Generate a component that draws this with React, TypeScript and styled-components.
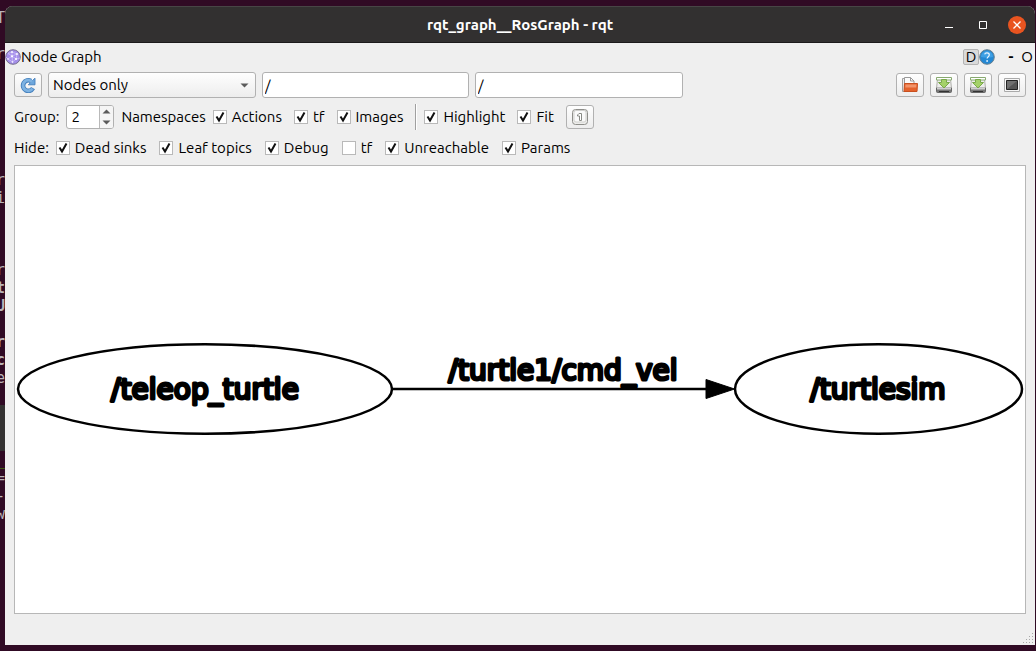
import React, { useState } from "react";
import styled, { createGlobalStyle, css } from "styled-components";

const GlobalStyle = createGlobalStyle`
  *, *::before, *::after { box-sizing: border-box; }
  body { margin: 0; background: #300a24; }
  button, input, select { font: inherit; color: inherit; margin: 0; }
`;

const uiFont = `"Ubuntu", "Noto Sans", "Open Sans", sans-serif`;

const Desktop = styled.div`
  display: grid;
  grid-template-columns: 5px minmax(0, 1fr) 1px;
  min-height: 100vh;
  background: #300a24;
`;

const Terminal = styled.div`
  overflow: hidden;
  padding-top: 9px;
  font: 15px/18px "DejaVu Sans Mono", monospace;
  color: #b9b4b8;
`;

const TerminalLine = styled.div<{ $bold?: boolean; $green?: boolean }>`
  display: flex;
  justify-content: flex-end;
  height: 18px;
  font-weight: ${(p) => (p.$bold ? 700 : 400)};
  color: ${(p) => (p.$green ? "#4e9a06" : "inherit")};
`;

const TerminalTab = styled.div`
  height: 46px;
  background: #333131;
`;

const Window = styled.main`
  display: flex;
  flex-direction: column;
  margin: 6px 0;
  border-radius: 8px 8px 0 0;
  overflow: hidden;
  background: #efefef;
  font: 15px/20px ${uiFont};
  color: #000;
`;

const TitleBar = styled.header`
  display: grid;
  grid-template-columns: 1fr auto 1fr;
  align-items: center;
  height: 37px;
  background: #323030;
  border-top: 1px solid #474545;
  border-bottom: 1px solid #1c1a1b;
  color: #fff;
`;

const WindowTitle = styled.h1`
  grid-column: 2;
  margin: 0;
  font-size: 15px;
  line-height: 20px;
  font-weight: 700;
`;

const WindowControls = styled.div`
  display: flex;
  justify-content: flex-end;
  gap: 16px;
  padding-right: 9px;
`;

const WindowButton = styled.button<{ $close?: boolean }>`
  display: grid;
  place-items: center;
  width: 18px;
  height: 18px;
  padding: 0;
  border: 0;
  border-radius: 50%;
  background: ${(p) => (p.$close ? "#e95420" : "transparent")};
`;

const PluginBar = styled.div`
  display: flex;
  align-items: center;
  justify-content: space-between;
  height: 28px;
`;

const PluginName = styled.h2`
  display: flex;
  align-items: center;
  margin: 0;
  font-size: 15px;
  line-height: 20px;
  font-weight: 400;
`;

const PluginActions = styled.div`
  display: flex;
  align-items: center;
`;

const FlatButton = styled.button<{ $raised?: boolean; $bold?: boolean }>`
  display: grid;
  place-items: center;
  width: 16px;
  height: 16px;
  padding: 0;
  border: 0;
  background: transparent;
  line-height: 14px;
  font-weight: ${(p) => (p.$bold ? 700 : 400)};
  ${(p) =>
    p.$raised &&
    css`
      border: 1px solid #b4b4b4;
      border-radius: 2px;
      background: #dadada;
    `}
`;

const DockButtons = styled.div`
  display: flex;
  margin-left: 8px;
`;

const frame = css`
  border: 1px solid #b1b1b1;
  border-radius: 3px;
`;

const Toolbar = styled.div`
  display: grid;
  grid-template-columns: 28px 208px 207px 208px 1fr;
  align-items: center;
  gap: 6px;
  height: 28px;
  padding: 0 9px;
`;

const ToolButtons = styled.div`
  display: flex;
  justify-content: flex-end;
  gap: 6px;
`;

const ToolButton = styled.button`
  ${frame}
  display: grid;
  place-items: center;
  width: 28px;
  height: 24px;
  padding: 0;
  background: linear-gradient(#fefefe, #ededed);
`;

const SelectBox = styled.div`
  display: grid;
  align-items: center;

  > * {
    grid-area: 1 / 1;
  }

  > svg {
    justify-self: end;
    margin-right: 7px;
    pointer-events: none;
  }
`;

const Select = styled.select`
  ${frame}
  appearance: none;
  width: 100%;
  height: 26px;
  padding: 0 4px;
  background: linear-gradient(#fefefe, #ededed);
`;

const TextBox = styled.input`
  ${frame}
  width: 100%;
  height: 26px;
  padding: 0 2px;
  background: #fff;
`;

const OptionRow = styled.div<{ $tall?: boolean }>`
  display: flex;
  align-items: center;
  gap: ${(p) => (p.$tall ? "12px" : "13px")};
  height: ${(p) => (p.$tall ? "36px" : "26px")};
  padding: 0 9px;
`;

const FieldGroup = styled.div`
  display: flex;
  align-items: center;
  gap: 7px;
`;

const SpinBox = styled.div`
  ${frame}
  display: grid;
  grid-template-columns: 1fr 14px;
  width: 48px;
  height: 24px;
  overflow: hidden;
  background: #fff;
`;

const SpinInput = styled.input`
  appearance: textfield;
  min-width: 0;
  padding: 0 4px;
  border: 0;
  background: transparent;

  &::-webkit-inner-spin-button {
    appearance: none;
  }
`;

const SpinSteps = styled.div`
  display: grid;
  grid-template-rows: 1fr 1fr;
  border-left: 1px solid #b9b9b9;
  background: #f5f5f5;
`;

const StepButton = styled.button`
  display: grid;
  place-items: center;
  padding: 0;
  border: 0;
  background: transparent;
`;

const CheckLabel = styled.label`
  display: flex;
  align-items: center;
  gap: 5px;
  white-space: nowrap;
`;

const CheckMark = styled.span`
  display: grid;

  > * {
    grid-area: 1 / 1;
  }

  > svg {
    visibility: hidden;
    pointer-events: none;
  }

  > input:checked + svg {
    visibility: visible;
  }
`;

const CheckInput = styled.input`
  appearance: none;
  width: 14px;
  height: 14px;
  border: 1px solid #b9b9b9;
  background: #fff;
`;

const Separator = styled.div`
  width: 2px;
  height: 26px;
  border-left: 1px solid #a0a0a0;
  border-right: 1px solid #fff;
`;

const GraphView = styled.section`
  flex: 1;
  display: grid;
  align-items: center;
  margin: 4px 9px 0;
  border: 1px solid #b7b7b7;
  background: #fff;
`;

const GraphDrawing = styled.svg`
  display: block;
  width: 100%;
`;

const GraphText = styled.text`
  font: 28px "DejaVu Sans", sans-serif;
  text-anchor: middle;
  fill: #000;
  stroke: #000;
  stroke-width: 3px;
  stroke-linejoin: round;
`;

const StatusBar = styled.footer`
  display: flex;
  justify-content: flex-end;
  align-items: flex-end;
  height: 31px;
  padding: 0 1px 1px;
`;

const NodeGraphIcon = () => (
  <svg width="16" height="16" viewBox="0 0 16 16" aria-hidden="true">
    <circle cx="8" cy="8" r="7.3" fill="#a48fe9" stroke="#77708f" />
    <path d="M3 4.5 7 3l5 2-1 5-3.5 3L3 10l4-3 4 3M7 3v4L3 4.5M12 5 7 7l.5 6M1 8l2 2M11 10l4-1" fill="none" stroke="#d4c6fc" strokeWidth=".7" />
    <g fill="#fff">
      <circle cx="7" cy="3" r=".9" /><circle cx="12" cy="5" r=".9" /><circle cx="7" cy="7.3" r="1.1" />
      <circle cx="3" cy="10" r=".8" /><circle cx="11" cy="10" r="1.1" /><circle cx="7.5" cy="13" r=".8" />
    </g>
  </svg>
);

const HelpIcon = () => (
  <svg width="16" height="16" viewBox="0 0 16 16" aria-hidden="true">
    <circle cx="8" cy="8" r="7.3" fill="#2488d4" stroke="#69808f" />
    <path d="M2 8a6 6 0 0 1 12 0Q8 9 2 8z" fill="#3fa0e4" />
    <path d="M5.7 5.3C6 3.5 10.3 3.3 10.3 6c0 1.7-2.2 1.8-2.2 3.6" fill="none" stroke="#e8f4ff" strokeWidth="1.2" />
    <circle cx="8.1" cy="12" r=".9" fill="#e8f4ff" />
  </svg>
);

const RefreshIcon = () => (
  <svg width="16" height="16" viewBox="0 0 16 16" aria-hidden="true">
    <path d="M13 11.2A5.3 5.3 0 1 1 11 4" fill="none" stroke="#4580bd" strokeWidth="4.6" />
    <path d="M15 1.2v6.6H8.3l2-2 2.7-2.8z" fill="#6ca6dc" stroke="#4580bd" strokeWidth=".9" />
    <path d="M12.6 11.6A5.3 5.3 0 1 1 12 4.7" fill="none" stroke="#7db2e2" strokeWidth="2.8" />
  </svg>
);

const FolderIcon = () => (
  <svg width="18" height="18" viewBox="0 0 18 18" aria-hidden="true">
    <path d="M1.5 15.5v-13h4l1 1v12z" fill="#eee" stroke="#a0a0a0" />
    <path d="M3.5 14V1.5h6L13 5v9z" fill="#fcfcfc" stroke="#9a9a9a" />
    <path d="M9.5 1.5V5H13" fill="none" stroke="#9a9a9a" />
    <path d="M3.5 7.5h13l-.5 8H3z" fill="#e4622c" stroke="#c9501f" />
    <path d="M4.5 8.5h11l-.2 3h-11z" fill="#f2946a" />
  </svg>
);

const SaveIcon = () => (
  <svg width="18" height="18" viewBox="0 0 18 18" aria-hidden="true">
    <path d="M2.5 3h13l1 9.5h-15z" fill="#ededeb" stroke="#b0b0ac" />
    <path d="M1.5 12h15v3.5q0 1-1 1h-13q-1 0-1-1z" fill="#777" stroke="#666" />
    <path d="M2 11.5h14v2H2z" fill="#cfcfcf" />
    <path d="M4 15.5h10" stroke="#333" />
    <path d="M1.5 1.5h15V4h-15z" fill="#fff" stroke="#88aa70" />
    <path d="M6.5 3.5h5v3h3L9 12 3.5 6.500h3z" fill="#a4d169" stroke="#79a94a" />
  </svg>
);

const ImageIcon = () => (
  <svg width="16" height="14" viewBox="0 0 16 14" aria-hidden="true">
    <path d="M.5.5h15v13H.5z" fill="#f7f7f7" stroke="#aaa" />
    <path d="M2.5 2.5h11v9h-11z" fill="#555" stroke="#222" />
    <path d="M3 3h10L3 11z" fill="#707070" />
  </svg>
);

const FitIcon = () => (
  <svg width="16" height="16" viewBox="0 0 16 16" aria-hidden="true">
    <rect x=".5" y=".5" width="15" height="15" rx="3" fill="#ededeb" stroke="#8e8e8a" />
    <rect x="2" y="1.5" width="12" height="11.5" rx="2" fill="#fafafa" stroke="#d0d0cd" />
    <path d="M5.5 6 7 4.500h2.500v7h-2V7h-2z" fill="#fff" stroke="#888a85" />
  </svg>
);

const ArrowDown = () => (
  <svg width="9" height="5" viewBox="0 0 9 5" aria-hidden="true">
    <path d="M.5.5h8l-4 4z" fill="#5b5b5b" />
  </svg>
);

const ArrowUp = () => (
  <svg width="9" height="5" viewBox="0 0 9 5" aria-hidden="true">
    <path d="M.5 4.500h8l-4-4z" fill="#5b5b5b" />
  </svg>
);

const SizeGrip = () => (
  <svg width="11" height="11" viewBox="0 0 11 11" aria-hidden="true">
    <path d="M9 0h1v1H9zM6 3h1v1H6zM9 3h1v1H9zM3 6h1v1H3zM6 6h1v1H6zM9 6h1v1H9zM0 9h1v1H0zM3 9h1v1H3zM6 9h1v1H6zM9 9h1v1H9z" fill="#a8a8a8" />
  </svg>
);

function Check({ label, on = true }: { label: string; on?: boolean }) {
  return (
    <CheckLabel>
      <CheckMark>
        <CheckInput type="checkbox" defaultChecked={on} />
        <svg width="14" height="14" viewBox="0 0 14 14" aria-hidden="true">
          <path d="M3.5 6.5 6 10.5l4.5-8" fill="none" stroke="#111" strokeWidth="2" />
        </svg>
      </CheckMark>
      {label}
    </CheckLabel>
  );
}

const terminalText = ["T", "", "r", "", "", "", "", "", "", "r", "i", "", "", "", "r"];
const terminalBold = ["t", "U", "", "r", "c"];

export default function App() {
  const [depth, setDepth] = useState(2);
  return (
    <Desktop>
      <GlobalStyle />
      <Terminal aria-hidden="true">
        {terminalText.map((t, i) => <TerminalLine key={i}>{t}</TerminalLine>)}
        {terminalBold.map((t, i) => <TerminalLine key={i} $bold>{t}</TerminalLine>)}
        <TerminalLine>e</TerminalLine>
        <TerminalLine />
        <TerminalTab />
        <TerminalLine $green>_</TerminalLine>
        <TerminalLine>=</TerminalLine>
        <TerminalLine>-</TerminalLine>
        <TerminalLine>w</TerminalLine>
      </Terminal>
      <Window>
        <TitleBar>
          <WindowTitle>rqt_graph__RosGraph - rqt</WindowTitle>
          <WindowControls>
            <WindowButton aria-label="Minimize">
              <svg width="8" height="8"><path d="M0 6.500h8" stroke="#fff" /></svg>
            </WindowButton>
            <WindowButton aria-label="Maximize">
              <svg width="8" height="8"><path d="M.5.5h7v7h-7z" fill="none" stroke="#fff" /></svg>
            </WindowButton>
            <WindowButton $close aria-label="Close">
              <svg width="8" height="8"><path d="M.5.5l7 7M7.5.5l-7 7" stroke="#fff" strokeWidth="1.3" /></svg>
            </WindowButton>
          </WindowControls>
        </TitleBar>
        <PluginBar>
          <PluginName><NodeGraphIcon />Node Graph</PluginName>
          <PluginActions>
            <FlatButton $raised>D</FlatButton>
            <FlatButton aria-label="Help"><HelpIcon /></FlatButton>
            <DockButtons>
              <FlatButton $bold>-</FlatButton>
              <FlatButton>O</FlatButton>
            </DockButtons>
          </PluginActions>
        </PluginBar>
        <Toolbar>
          <ToolButton aria-label="Refresh"><RefreshIcon /></ToolButton>
          <SelectBox>
            <Select aria-label="Graph type" defaultValue="Nodes only">
              <option>Nodes only</option>
              <option>Nodes/Topics (active)</option>
              <option>Nodes/Topics (all)</option>
            </Select>
            <ArrowDown />
          </SelectBox>
          <TextBox aria-label="Node filter" defaultValue="/" />
          <TextBox aria-label="Topic filter" defaultValue="/" />
          <ToolButtons>
            <ToolButton aria-label="Load"><FolderIcon /></ToolButton>
            <ToolButton aria-label="Save as DOT"><SaveIcon /></ToolButton>
            <ToolButton aria-label="Save as SVG"><SaveIcon /></ToolButton>
            <ToolButton aria-label="Save as image"><ImageIcon /></ToolButton>
          </ToolButtons>
        </Toolbar>
        <OptionRow $tall>
          <FieldGroup>
            <label htmlFor="group">Group:</label>
            <SpinBox>
              <SpinInput id="group" type="number" value={depth} onChange={(e) => setDepth(Number(e.target.value))} />
              <SpinSteps>
                <StepButton aria-label="Increase" onClick={() => setDepth(depth + 1)}><ArrowUp /></StepButton>
                <StepButton aria-label="Decrease" onClick={() => setDepth(depth - 1)}><ArrowDown /></StepButton>
              </SpinSteps>
            </SpinBox>
            <span>Namespaces</span>
            <Check label="Actions" />
          </FieldGroup>
          <Check label="tf" />
          <Check label="Images" />
          <FieldGroup>
            <Separator />
            <Check label="Highlight" />
          </FieldGroup>
          <Check label="Fit" />
          <ToolButton aria-label="Fit in view"><FitIcon /></ToolButton>
        </OptionRow>
        <OptionRow>
          <FieldGroup>
            <span>Hide:</span>
            <Check label="Dead sinks" />
          </FieldGroup>
          <Check label="Leaf topics" />
          <Check label="Debug" />
          <Check label="tf" on={false} />
          <Check label="Unreachable" />
          <Check label="Params" />
        </OptionRow>
        <GraphView>
          <GraphDrawing viewBox="0 0 1010 94" role="img" aria-label="Node graph">
            <g fill="none" stroke="#000" strokeWidth="2.5">
              <ellipse cx="190" cy="46" rx="187" ry="44.7" />
              <ellipse cx="863.5" cy="46" rx="143.5" ry="44.7" />
              <path d="M377 46h315" />
            </g>
            <path d="M691 36.5 719.5 46 691 55.5z" stroke="#000" />
            <GraphText x="190" y="56">/teleop_turtle</GraphText>
            <GraphText x="548" y="37">/turtle1/cmd_vel</GraphText>
            <GraphText x="863" y="56">/turtlesim</GraphText>
          </GraphDrawing>
        </GraphView>
        <StatusBar><SizeGrip /></StatusBar>
      </Window>
    </Desktop>
  );
}
